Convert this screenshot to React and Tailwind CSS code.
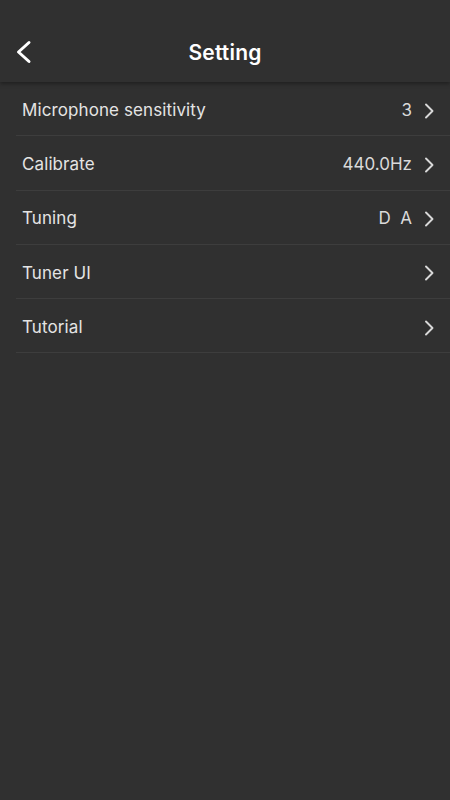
const rows = [
  { label: 'Microphone sensitivity', value: '3' },
  { label: 'Calibrate', value: '440.0Hz' },
  { label: 'Tuning', value: 'D  A' },
  { label: 'Tuner UI', value: '' },
  { label: 'Tutorial', value: '' },
];

const BackIcon = () => (
  <svg width="16" height="24" viewBox="0 0 16 24" fill="none">
    <path d="M13 2.5 L2.5 12 L13 21.5" stroke="#fff" strokeWidth="3" strokeLinecap="round" strokeLinejoin="round" />
  </svg>
);

const Chevron = () => (
  <svg width="11" height="16" viewBox="0 0 11 16" fill="none">
    <path d="M2 1.5 L8.5 8 L2 14.5" stroke="#d8d8d8" strokeWidth="1.9" strokeLinecap="round" strokeLinejoin="round" />
  </svg>
);

export default function App() {
  return (
    <div className="w-[450px] h-[800px] bg-[#303030] font-['Inter',sans-serif] overflow-hidden">
      {/* Header */}
      <div className="relative h-[82px] flex items-end justify-center pb-[14px] bg-[#303030] shadow-[0_2px_4px_rgba(0,0,0,0.35)] z-10">
        <button className="absolute left-[16px] top-[40px]">
          <BackIcon />
        </button>
        <h1 className="text-white text-[21px] font-semibold tracking-[0.2px]">Setting</h1>
      </div>

      {/* Rows */}
      <div className="pl-[16px]">
        {rows.map((row) => (
          <div
            key={row.label}
            className="h-[54.25px] flex items-center justify-between border-b border-[#3d3d3d] pl-[6px] pr-[15px] pt-[4px]"
          >
            <span className="text-[#e4e4e4] text-[17px] tracking-[0.1px]">{row.label}</span>
            <div className="flex items-center gap-[12px]">
              {row.value && (
                <span className="text-[#dadada] text-[17px] whitespace-pre">{row.value}</span>
              )}
              <Chevron />
            </div>
          </div>
        ))}
      </div>
    </div>
  );
}
